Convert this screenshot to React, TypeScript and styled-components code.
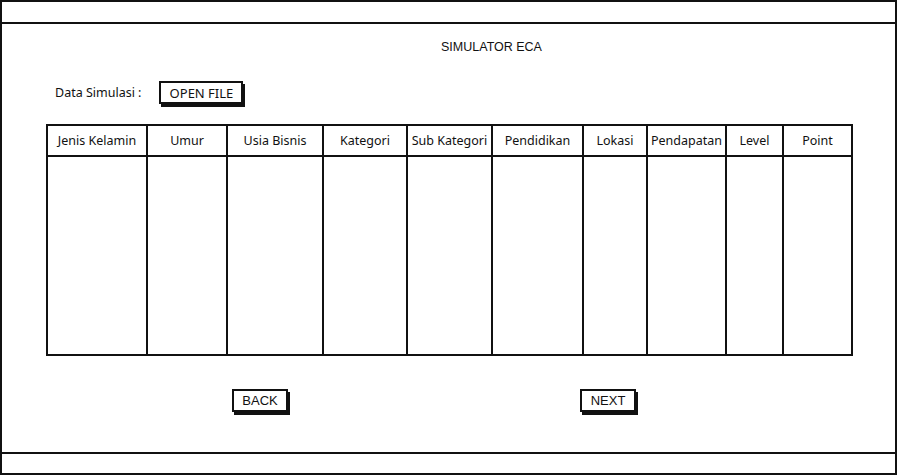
import React from "react";
import styled, { createGlobalStyle } from "styled-components";

const GlobalStyle = createGlobalStyle`
  html, body {
    margin: 0;
    padding: 0;
    background: #ffffff;
  }
  body {
    font-family: "Liberation Sans", Arial, sans-serif;
    color: #111;
  }
`;

const columns = [
  { label: "Jenis Kelamin", width: 98 },
  { label: "Umur", width: 80 },
  { label: "Usia Bisnis", width: 96 },
  { label: "Kategori", width: 84 },
  { label: "Sub Kategori", width: 85 },
  { label: "Pendidikan", width: 91 },
  { label: "Lokasi", width: 64 },
  { label: "Pendapatan", width: 79 },
  { label: "Level", width: 57 },
  { label: "Point", width: 69 },
];

const Frame = styled.div`
  box-sizing: border-box;
  width: 897px;
  height: 475px;
  border: 2px solid #111;
  display: flex;
  flex-direction: column;
`;

const TopBar = styled.div`
  height: 20px;
  border-bottom: 2px solid #111;
`;

const Main = styled.div`
  flex: 1;
  display: flex;
  flex-direction: column;
  padding-top: 16px;
`;

const Footer = styled.div`
  height: 19px;
  border-top: 2px solid #111;
`;

const Title = styled.div`
  display: flex;
  justify-content: center;
  padding-left: 86px;
  font-size: 12.5px;
  line-height: 14px;
`;

const DataRow = styled.div`
  display: flex;
  align-items: center;
  gap: 18px;
  margin-top: 27px;
  padding-left: 53px;
`;

const Label = styled.span`
  font-family: "Noto Sans", "Liberation Sans", sans-serif;
  font-size: 12.5px;
`;

const Button = styled.div<{ $width: number; $sketch?: boolean }>`
  box-sizing: border-box;
  width: ${(p) => p.$width}px;
  height: 23px;
  border: 2px solid #111;
  box-shadow: 2px 3px 0 #111;
  background: #fff;
  display: flex;
  align-items: center;
  justify-content: center;
  font-family: ${(p) =>
    p.$sketch ? `"Noto Sans", "Liberation Sans", sans-serif` : `"Liberation Sans", Arial, sans-serif`};
  font-size: 13px;
  color: #111;
`;

const Table = styled.div`
  box-sizing: border-box;
  margin-top: 20px;
  margin-left: 44px;
  width: 807px;
  height: 232px;
  border: 2px solid #111;
  display: flex;
`;

const Column = styled.div<{ $width: number }>`
  box-sizing: border-box;
  width: ${(p) => p.$width}px;
  display: flex;
  flex-direction: column;
  & + & {
    border-left: 2px solid #111;
  }
`;

const HeaderCell = styled.div`
  height: 29px;
  border-bottom: 2px solid #111;
  display: flex;
  align-items: center;
  justify-content: center;
  white-space: nowrap;
  font-family: "Noto Sans", "Liberation Sans", sans-serif;
  font-size: 12.5px;
  color: #111;
`;

const ButtonRow = styled.div`
  display: flex;
  margin-top: 33px;
  padding-left: 230px;
  gap: 292px;
`;

export default function App() {
  return (
    <>
      <GlobalStyle />
      <Frame>
        <TopBar />
        <Main>
          <Title>SIMULATOR ECA</Title>
          <DataRow>
            <Label>Data Simulasi :</Label>
            <Button $width={84} $sketch>
              OPEN FILE
            </Button>
          </DataRow>
          <Table>
            {columns.map((c) => (
              <Column key={c.label} $width={c.width}>
                <HeaderCell>{c.label}</HeaderCell>
              </Column>
            ))}
          </Table>
          <ButtonRow>
            <Button $width={56}>BACK</Button>
            <Button $width={56}>NEXT</Button>
          </ButtonRow>
        </Main>
        <Footer />
      </Frame>
    </>
  );
}
